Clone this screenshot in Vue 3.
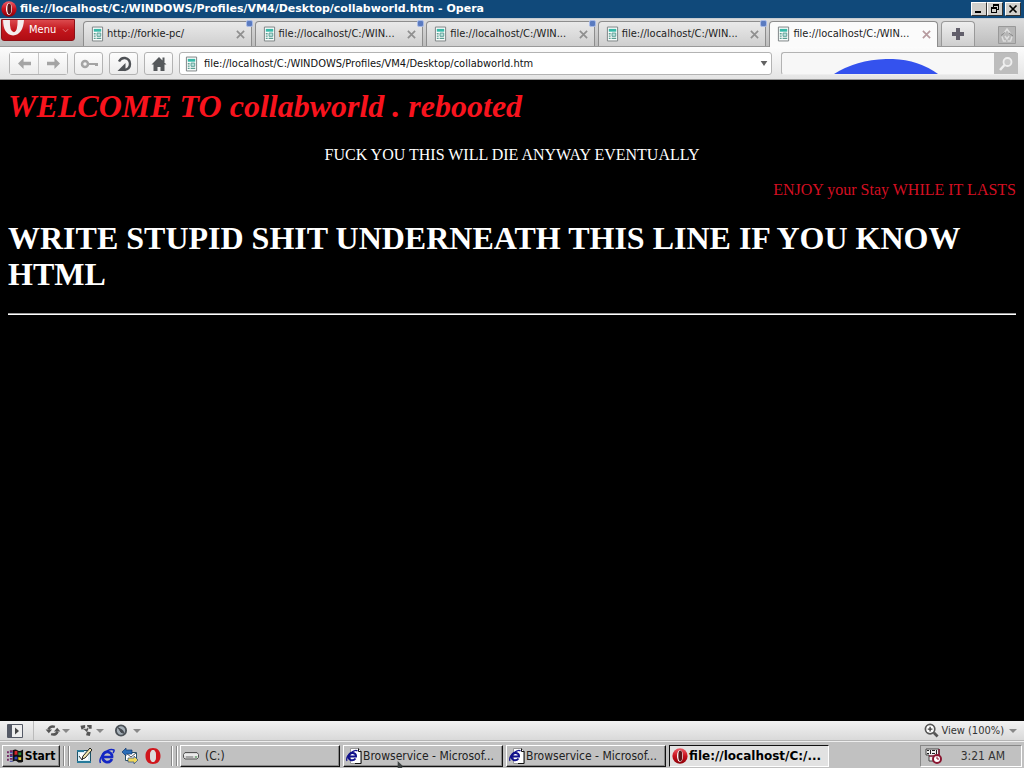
<script setup>
import { ref } from 'vue'

const address = ref('file://localhost/C:/WINDOWS/Profiles/VM4/Desktop/collabworld.htm')
const search = ref('')
const active = ref(4)
const tabs = [
  'http://forkie-pc/',
  'file://localhost/C:/WIN...',
  'file://localhost/C:/WIN...',
  'file://localhost/C:/WIN...',
  'file://localhost/C:/WIN...'
]
const tasks = [
  { icon: 'drive', label: '(C:)' },
  { icon: 'ie', label: 'Browservice - Microsof...' },
  { icon: 'ie', label: 'Browservice - Microsof...' },
  { icon: 'opera', label: 'file://localhost/C:/...', active: true }
]
</script>

<template>
  <div class="screen">
    <svg class="defs" aria-hidden="true">
      <defs>
        <linearGradient id="ored" x1="0" y1="0" x2="0" y2="1">
          <stop offset="0" stop-color="#f0606a" /><stop offset=".5" stop-color="#c8101c" /><stop offset="1" stop-color="#8c0008" />
        </linearGradient>
        <symbol id="opera" viewBox="0 0 16 16">
          <ellipse cx="8" cy="8" rx="7.6" ry="7.8" fill="url(#ored)" />
          <ellipse cx="8" cy="8" rx="3" ry="6" fill="#fff" />
          <ellipse cx="8.3" cy="8" rx="2" ry="5.4" fill="#5d1518" />
        </symbol>
        <symbol id="page" viewBox="0 0 14 16">
          <path d="M1.5.5h11v15h-11z" fill="#f8fbfa" stroke="#777d80" />
          <path d="M3 2.5h8v3H3z" fill="#39b9a8" />
          <path d="M3 7h2v1.500H3zM3 9.500h2V11H3zM3 12h2v1.500H3zM6 12h5v1.500H6z" fill="#5a9d92" />
          <path d="M6.500 7h4v3.500h-4z" fill="#b9e2dc" stroke="#579c93" />
        </symbol>
        <symbol id="ie" viewBox="0 0 16 16">
          <path d="M4.500.5h8l3 3v12h-11z" fill="#fff" stroke="#999" />
          <path d="M12.500.5v3h3M15 4v11.500H9" fill="none" stroke="#111" />
          <path d="M9.500 10.500Q7.500 13 4.500 12 2 10.500 2.800 7.500 4 4.500 7 5q3.200.5 3 3.500H3.500" fill="none" stroke="#11118c" stroke-width="2" />
          <path d="M1 13Q-.5 9 4.500 5T11.500 3" fill="none" stroke="#11118c" stroke-width="1.200" />
        </symbol>
      </defs>
    </svg>

    <header class="titlebar">
      <svg class="i16"><use href="#opera" /></svg>
      <span class="title">file://localhost/C:/WINDOWS/Profiles/VM4/Desktop/collabworld.htm - Opera</span>
      <button class="cap" aria-label="Minimize"><svg viewBox="0 0 12 10"><path d="M2 7h6v2H2z" /></svg></button>
      <button class="cap" aria-label="Restore"><svg viewBox="0 0 12 10"><path d="M4 0h6v6H8V5h1V2H5v1H4zM2 3h6v6H2zM3 5v3h4V5z" fill-rule="evenodd" /></svg></button>
      <button class="cap close" aria-label="Close"><svg viewBox="0 0 12 10"><path d="M2.500 1.500l7 7M9.500 1.500l-7 7" stroke="#000" stroke-width="1.700" /></svg></button>
    </header>

    <nav class="tabbar">
      <button class="menu">
        <svg class="menulogo" viewBox="0 0 26 22"><path d="M1 0q0 16 11 17Q23 16 24 0H17q0 13-4 13.500Q8 13 8.500 0z" fill="#f4eeee" /></svg>
        <span>Menu</span>
        <svg class="chev" viewBox="0 0 8 5"><path d="M1 1l3 3 3-3" fill="none" stroke="#e08a8d" /></svg>
      </button>
      <div class="tabs">
        <div v-for="(t, i) in tabs" :key="i" class="tab" :class="{ on: active === i }">
          <button class="tablabel" @click="active = i"><svg class="pg"><use href="#page" /></svg><span>{{ t }}</span></button>
          <button class="x" aria-label="Close tab"><svg viewBox="0 0 10 10"><path d="M1 1l8 8M9 1L1 9" fill="none" stroke="currentColor" stroke-width="1.900" /></svg></button>
          <i v-if="active !== i" class="dot"></i>
        </div>
      </div>
      <button class="plus" aria-label="New tab"><svg viewBox="0 0 12 12"><path d="M4 0h4v4h4v4H8v4H4V8H0V4h4z" fill="#625f6b" /></svg></button>
      <button class="trash" aria-label="Closed tabs"><svg viewBox="0 0 18 18"><path d="M.5.5h17v17H.5z" fill="#b6b6b6" stroke="#999" /><path d="M5.500 8L9 3l3.500 5M4 10.500L5.500 15H8M14 10.500L12.500 15H9.500M7 10l2 3 2-3" fill="none" stroke="#ddd" stroke-width="1.500" /><path d="M3 9.500l4-3M11 7l4 3" stroke="#888" /></svg></button>
    </nav>

    <div class="toolbar">
      <div class="group">
        <button class="tb" aria-label="Back"><svg viewBox="0 0 16 14"><path d="M1 7l6-6v4h8v4H7v4z" fill="#a4a4a4" /></svg></button>
        <button class="tb" aria-label="Forward"><svg viewBox="0 0 16 14"><path d="M15 7L9 1v4H1v4h8v4z" fill="#a4a4a4" /></svg></button>
      </div>
      <button class="tb box" aria-label="Log in"><svg class="key" viewBox="0 0 18 14"><circle cx="5" cy="7" r="3" fill="none" stroke="#a4a4a4" stroke-width="2.500" /><path d="M8 6h10v3h-3V8H8z" fill="#a4a4a4" /></svg></button>
      <button class="tb box" aria-label="Reload"><svg class="big" viewBox="0 0 16 16"><path d="M3 5.500Q5 1.500 9 2q5 1 5 6t-5.500 6" fill="none" stroke="#4f5256" stroke-width="2.400" /><path d="M9.500 7v8H1.500z" fill="#4f5256" /></svg></button>
      <button class="tb box" aria-label="Home"><svg class="big" viewBox="0 0 16 16"><path d="M8 1l7.500 7.500H13.500V15h-4v-4h-3v4h-4V8.500H.5zM11.500 1.500h2V6h-2z" fill="#55585b" /></svg></button>
      <div class="address">
        <svg class="pg"><use href="#page" /></svg>
        <input v-model="address" aria-label="Address" />
        <button aria-label="Address history"><svg viewBox="0 0 8 6"><path d="M0 0h8L4 6z" fill="#626262" /></svg></button>
      </div>
      <div class="search">
        <input v-model="search" aria-label="Search" />
        <svg class="arc" viewBox="0 0 104 15"><path d="M0 15Q22 1 52 0t52 15z" fill="#3452ee" /></svg>
        <button aria-label="Search the web"><svg viewBox="0 0 16 16"><circle cx="9.500" cy="6" r="4" fill="#c9c9c9" stroke="#efefef" stroke-width="1.800" /><path d="M6.500 9L2 14" stroke="#efefef" stroke-width="2.500" /></svg></button>
      </div>
    </div>

    <main class="page">
      <h1 class="welcome">WELCOME TO collabworld . rebooted</h1>
      <p class="mid">FUCK YOU THIS WILL DIE ANYWAY EVENTUALLY</p>
      <p class="right">ENJOY your Stay WHILE IT LASTS</p>
      <h1>WRITE STUPID SHIT UNDERNEATH THIS LINE IF YOU KNOW HTML</h1>
      <hr />
    </main>

    <div class="status">
      <button class="panel" aria-label="Panels"><svg viewBox="0 0 16 14"><path d="M.5.5h15v13H.5z" fill="#eee" stroke="#555a66" /><path d="M1 1h4v12H1z" fill="#555a66" /><path d="M8 3.500v7L12 7z" fill="#444" /></svg></button>
      <button class="st" aria-label="Synchronize"><svg viewBox="0 0 16 14"><path d="M3 6Q5 1.500 10 3M13 8Q11 12.500 6 11" fill="none" stroke="#555" stroke-width="2.600" /><path d="M0 6h7L3.500 10zM9 8h7l-3.500-4z" fill="#555" /></svg><b class="dd"></b></button>
      <button class="st" aria-label="Share"><svg viewBox="0 0 16 14"><path d="M1 2l5-1v4l-4 1zM8 1h5v4H9zM8 8l4 1-1 4-4-1zM4 5l4 4 2-5-1-1-2 3-2-2z" fill="#555" /></svg><b class="dd"></b></button>
      <button class="st" aria-label="Turbo"><svg viewBox="0 0 16 14"><circle cx="8" cy="7" r="5.500" fill="#a5afb7" stroke="#4b5157" stroke-width="2" /><path d="M5 4l5 3 1 3-3-1z" fill="#454a50" stroke="#454a50" /></svg><b class="dd far"></b></button>
      <button class="view"><svg viewBox="0 0 16 16"><circle cx="6.500" cy="6.500" r="5" fill="#fff" stroke="#555" stroke-width="1.800" /><path d="M4 6.500h5M6.500 4v5" stroke="#444" stroke-width="1.500" /><path d="M10.500 10.500l4 4" stroke="#555" stroke-width="3" /></svg><span>View (100%)</span><b class="dd"></b></button>
    </div>

    <footer class="taskbar">
      <button class="start"><svg viewBox="0 0 18 16"><path d="M6 2q3-2 5 0t6-1v13q-4 2-6 0t-5 0z" fill="#111" /><path d="M8 3q2-1 3 0v4q-1-1-3 0z" fill="#d8252a" /><path d="M12 4q2 .5 3 0v3q-1 .5-3 0z" fill="#248a38" /><path d="M8 9q2-1 3 0v3q-1-1-3 0z" fill="#2843b5" /><path d="M12 9q2 .5 3 0v3q-1 .5-3 0z" fill="#e4c728" /><path d="M0 3h2v2H0zM3 2h3v2H3zM0 7h2v2H0zM3 6h3v2H3zM0 11h2v2H0zM3 10h3v2H3z" fill="#742b66" /><path d="M3 4h3v1H3zM3 8h3v1H3zM3 13h3v1H3z" fill="#3038a0" /></svg><span>Start</span></button>
      <i class="sep"></i>
      <div class="quick">
        <button aria-label="Show desktop"><svg viewBox="0 0 16 16"><path d="M1.500 2.500h13v12h-13z" fill="#dbeff8" stroke="#195268" /><path d="M1 2h7v2H1zM1 13h14v2H1z" fill="#267a9a" /><path d="M4 5h8v7H4z" fill="#fff" /><path d="M6 11l1-3 7-8 2 2-7 8z" fill="#f2e8b0" stroke="#222" /><path d="M3 8l3 4 2-2" fill="none" stroke="#333" /></svg></button>
        <button aria-label="Internet Explorer"><svg viewBox="0 0 16 16"><path d="M13 11q-2 4-6 3-4-1.500-3.500-6Q5 3.500 9 4q4.500 1 4 5H4" fill="none" stroke="#1427c4" stroke-width="2.700" /><path d="M1.500 15Q-.5 11 5 5.500T15 2q.5 1-1 3" fill="none" stroke="#1427c4" stroke-width="1.500" /></svg></button>
        <button aria-label="Outlook Express"><svg viewBox="0 0 16 16"><path d="M3.500 4.500h11v8h-11z" fill="#fff" stroke="#29516a" /><path d="M4 5l5 4 5-4" fill="none" stroke="#555" /><path d="M0 4l4-4v2h6v4H4v2z" fill="#2b6db8" stroke="#113a70" stroke-width=".7" /><path d="M16 12l-4-4v2H6v4h6v2z" fill="#f1d85a" stroke="#284c81" stroke-width=".7" /></svg></button>
        <button aria-label="Opera"><svg viewBox="0 0 16 16"><path d="M8 0C3 0 .5 3.500.5 8S3 16 8 16s7.500-3.500 7.500-8S13 0 8 0zm0 2c2 0 3 2.500 3 6s-1 6-3 6-3-2.500-3-6 1-6 3-6z" fill="#d0161c" fill-rule="evenodd" /><path d="M8 2c2 0 3 2.500 3 6s-1 6-3 6-3-2.500-3-6 1-6 3-6z" fill="#ddd" /></svg></button>
      </div>
      <i class="sep"></i>
      <div class="tasks">
        <button v-for="(t, i) in tasks" :key="i" class="task" :class="{ on: t.active }">
          <svg v-if="t.icon === 'drive'" class="drive" viewBox="0 0 16 8"><path d="M2 1h12l1.500 2v3L14 7.500H2L.5 6V3z" fill="#d7d7d7" stroke="#555" /><path d="M1 3.500h14" stroke="#fff" /><path d="M3 5.500h7" stroke="#777" /><path d="M12 5h2v1h-2z" fill="#398f43" /></svg>
          <svg v-else class="i16"><use :href="'#' + t.icon" /></svg>
          <span>{{ t.label }}</span>
        </button>
      </div>
      <div class="tray">
        <svg viewBox="0 0 18 16"><path d="M1 1h13v12H4V7H1z" fill="#eee" stroke="#444" /><path d="M2 2h2v1H2zM5 2h1v4H5zM2 5h2v1H2zM7 2h3v1H7zM7 5h3v1H7zM11 2h1v4h-1z" fill="#222" /><path d="M4 8h10M14 1v7" stroke="#751830" stroke-width="1.500" /><circle cx="12" cy="11" r="4" fill="#fff" stroke="#8a1530" stroke-width="2" /><path d="M12 8.500V11h2" fill="none" stroke="#8a1530" /></svg>
        <time>3:21 AM</time>
      </div>
    </footer>
    <svg class="cursor" viewBox="0 0 8 10"><path d="M0 0l8 8H5l2 2H0z" fill="#3d4242" /></svg>
  </div>
</template>

<style>
html, body { margin: 0; background: #000; }
</style>

<style scoped>
.screen { position: relative; height: 100vh; display: flex; flex-direction: column; overflow: hidden; font: 11px/14px "DejaVu Sans Condensed", "DejaVu Sans", sans-serif; color: #111; }
.screen * { box-sizing: border-box; }
.defs { position: absolute; width: 0; height: 0; }
button { padding: 0; margin: 0; border: 0; background: none; font: inherit; color: inherit; display: flex; align-items: center; justify-content: center; flex: none; }
button span { white-space: nowrap; }
input { font: inherit; border: 0; padding: 0; background: none; outline: 0; color: #111; min-width: 0; }
svg { display: block; flex: none; }
.i16 { width: 16px; height: 16px; }
.pg { width: 13px; height: 16px; }

.titlebar { height: 18px; flex: none; display: flex; align-items: center; padding: 0 3px 0 1px; background: #10497a; color: #fff; }
.title { flex: 1; min-width: 0; margin-left: 3px; font: 700 11px/18px "DejaVu Sans", sans-serif; white-space: nowrap; }
.cap { width: 16px; height: 14px; background: #d2d0cc; border: 1px solid; border-color: #fff #333 #333 #fff; }
.cap svg { width: 12px; height: 10px; }
.close { margin-left: 2px; }

.tabbar { height: 29px; flex: none; display: flex; align-items: stretch; background: linear-gradient(#dcdcdc, #bdbdbd); border-top: 1px solid #c6ccd2; border-bottom: 1px solid #999; padding-right: 8px; }
.menu { position: relative; width: 74px; height: 22px; margin-left: 1px; border: 1px solid #8d1116; border-radius: 0 0 3px 3px; background: linear-gradient(#dc4a4e, #c3161c 50%, #b00d14); color: #fff; justify-content: flex-start; padding-left: 27px; gap: 6px; }
.menulogo { position: absolute; left: 0; top: 0; width: 24px; height: 20px; }
.chev { width: 7px; height: 5px; }
.tabs { flex: 1; min-width: 0; display: flex; gap: 3px; margin-left: 8px; padding-top: 2px; }
.tab { position: relative; flex: 1; min-width: 0; display: flex; align-items: center; padding: 0 6px 0 7px; border: 1px solid #8d8d8d; border-bottom: 0; border-radius: 4px 4px 0 0; background: linear-gradient(#e9e9e9, #cfcfcf); color: #222; }
.tab.on { background: #fbfbfb; margin-bottom: -1px; padding-bottom: 1px; }
.tablabel { flex: 1; min-width: 0; justify-content: flex-start; gap: 3px; overflow: hidden; }
.x { color: #8f8f8f; }
.on .x { color: #b79b9f; }
.x svg { width: 9px; height: 9px; }
.dot { position: absolute; right: -2px; top: -2px; width: 7px; height: 7px; border-radius: 2px; background: #5a7bc0; border: 1px solid #a9bbe6; }
.plus { width: 34px; margin: 2px 0 0 3px; border: 1px solid #999; border-bottom: 0; border-radius: 4px 4px 0 0; background: linear-gradient(#eee, #cfcfcf); }
.plus svg { width: 12px; height: 12px; }
.trash { margin-left: 23px; padding-top: 4px; }
.trash svg { width: 18px; height: 18px; }

.toolbar { height: 33px; flex: none; display: flex; align-items: center; gap: 6px; padding: 1px 6px 0 9px; background: linear-gradient(#fcfcfc, #e4e4e4); border-bottom: 1px solid #999; }
.group, .box, .address, .search { border: 1px solid #b3b3b3; border-radius: 3px; height: 23px; }
.group { display: flex; flex: none; width: 59px; }
.group .tb { flex: 1; }
.group .tb + .tb { border-left: 1px solid #c6c6c6; }
.tb { background: linear-gradient(#fdfdfd, #ececec); }
.tb svg { width: 15px; height: 13px; }
.tb .key { width: 18px; height: 14px; }
.tb .big { width: 16px; height: 16px; }
.box { width: 29px; }
.address { flex: 592; min-width: 0; display: flex; align-items: center; padding: 0 3px 0 5px; background: #fff; }
.address input { flex: 1; margin-left: 6px; }
.address button svg { width: 8px; height: 5px; }
.search { position: relative; flex: 240; min-width: 0; margin-left: 3px; display: flex; background: #f7f7f7; border-right: 0; border-bottom-color: #eee; }
.search input { flex: 1; }
.search button { width: 24px; background: #bdbdbd; }
.search button svg { width: 16px; height: 16px; }
.arc { position: absolute; left: 22%; bottom: 0; width: 104px; height: 15px; }

.page { flex: 1; min-height: 0; padding: 8px; background: #000; color: #fff; font: 16px/19px "Liberation Serif", serif; }
.page h1 { margin: 0; font-size: 32px; line-height: 36px; font-weight: 700; }
.page .welcome { color: #f8131d; font-style: italic; margin-bottom: 21px; }
.page p { margin: 0 0 16px; }
.mid { text-align: center; }
.right { text-align: right; color: #d40f22; }
.page p.right { margin-bottom: 21px; }
.page hr { margin: 21px 0 0; height: 2px; border: 0; border-top: 1px solid #999; background: #fff; }

.status { height: 20px; flex: none; display: flex; align-items: center; padding: 0 7px 0 0; background: linear-gradient(#f2f2f2, #d9d9d9); border-bottom: 1px solid #b5b5b5; color: #333; }
.panel { width: 34px; height: 19px; padding-right: 4px; border-right: 1px solid #bbb; }
.panel svg { width: 16px; height: 14px; }
.st { width: 34px; gap: 1px; justify-content: flex-start; }
.panel + .st { margin-left: 11px; }
.st svg { width: 16px; height: 13px; }
.dd { width: 0; border: 4px solid transparent; border-top-color: #888; border-bottom: 0; }
.far { margin-left: 3px; }
.view { margin-left: auto; gap: 2px; }
.view svg { width: 15px; height: 15px; }
.view .dd { margin-left: 3px; }

.taskbar { height: 27px; flex: none; display: flex; align-items: center; padding: 1px 2px 0; background: #c1c1c1; border-top: 1px solid #eee; font-size: 12px; }
.start { width: 58px; height: 22px; gap: 1px; border: 1px solid; border-color: #fff #222 #222 #fff; box-shadow: inset -1px -1px #888; font-weight: 700; color: #000; }
.start svg { width: 17px; height: 16px; }
.sep { flex: none; width: 6px; height: 20px; margin: 0 3px; border: 1px solid; border-color: #888; border-width: 0 1px; box-shadow: inset 1px 0 #fff, 1px 0 #fff; }
.quick { display: flex; gap: 7px; padding: 0 7px 0 4px; }
.quick svg { width: 16px; height: 16px; }
.tasks { flex: 1; min-width: 0; display: flex; gap: 3px; }
.task { flex: 0 1 160px; min-width: 0; height: 22px; justify-content: flex-start; padding: 0 2px; gap: 1px; border: 1px solid; border-color: #fff #111 #111 #fff; box-shadow: inset -1px -1px #888; overflow: hidden; color: #222; }
.task.on { border-color: #111 #fff #fff #111; box-shadow: none; background: #e2e2e2; color: #000; font-family: "DejaVu Sans", sans-serif; font-weight: 700; }
.drive { width: 16px; height: 9px; margin-right: 5px; }
.tray { flex: none; width: 102px; height: 22px; display: flex; align-items: center; justify-content: space-between; padding: 0 16px 0 4px; border: 1px solid; border-color: #888 #fff #fff #888; color: #333; }
.tray svg { width: 18px; height: 16px; }
.cursor { position: absolute; left: 397px; bottom: 0; width: 7px; height: 7px; }
</style>
